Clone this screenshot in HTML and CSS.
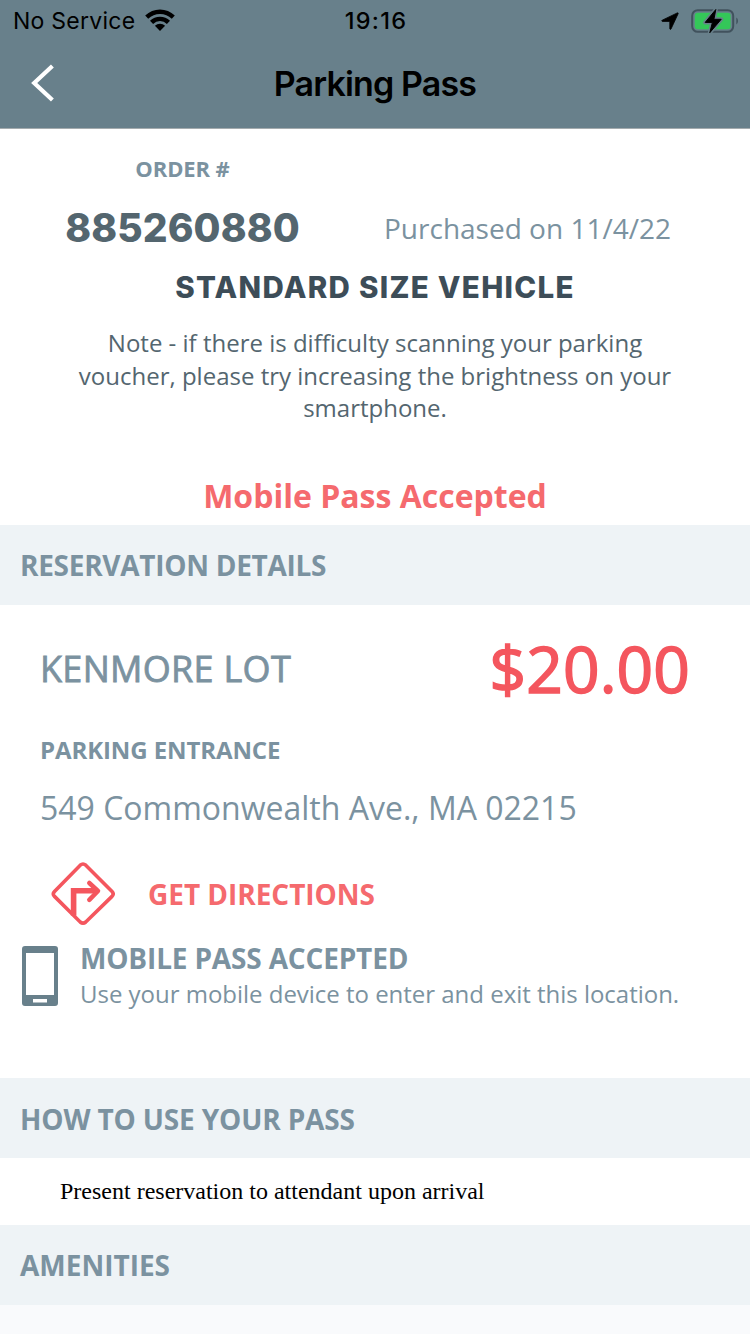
FILE: index.html
```html
<!DOCTYPE html>
<html lang="en">
<head>
<meta charset="utf-8">
<title>Parking Pass</title>
<link rel="stylesheet" href="styles.css">
</head>
<body>
<header class="header">
  <div class="status">
    <div class="status-left">
      <span class="carrier">No Service</span>
      <svg class="wifi" width="30" height="23" viewBox="0 0 30 23">
        <path d="M.2 6.600Q6.500.6 15 .6t14.800 6l-3 3.200Q21.800 5 15 5T3.200 9.800z"/>
        <path d="M5 11.800Q9.200 7.700 15 7.700t10 4.100l-3.100 3.100Q19 12.100 15 12.100t-6.900 2.800z"/>
        <path d="M9.900 16.800Q12 14.800 15 14.800t5.100 2L15 22z"/>
      </svg>
    </div>
    <span class="clock">19:16</span>
    <div class="status-right">
      <svg class="location" width="18" height="18" viewBox="0 0 18 18"><path d="M1.200 8.200 16.300.9q1.200-.3.8.9L10 17q-.8 1-1.200-.2V9.400H1.300q-1.200-.5-.1-1.200z" stroke="#000" stroke-width=".8"/></svg>
      <svg class="battery" width="50" height="26" viewBox="0 0 50 26">
        <rect x="3.200" y="2.200" width="41" height="21.600" rx="5.500" fill="none" stroke="#41525d" stroke-width="2"/>
        <rect x="5.800" y="4.800" width="35.800" height="16.400" rx="3" fill="#34c759"/>
        <path d="M47.300 9.600q1.700.8 1.700 3.400t-1.700 3.400z" fill="#41525d"/>
        <path d="M26.800 1.500 16.200 14.400h7.200l-2.600 10.300L32.200 11.300h-7.300z" stroke="#68808b" stroke-width="4" stroke-linejoin="round"/>
        <path d="M26.800 1.500 16.200 14.400h7.200l-2.600 10.300L32.200 11.300h-7.300z" stroke="#000" stroke-linejoin="round"/>
      </svg>
    </div>
  </div>
  <div class="navbar">
    <svg class="back" width="24" height="38" viewBox="0 0 24 38"><path d="M21.400 2 3.200 19l18.200 17" fill="none" stroke="#fff" stroke-width="4.200"/></svg>
    <h1 class="title">Parking Pass</h1>
  </div>
</header>
<main>
  <section class="order">
    <div class="order-grid">
      <div class="order-label">ORDER #</div>
      <div></div>
      <div class="order-number">885260880</div>
      <div class="purchased">Purchased on 11/4/22</div>
    </div>
    <div class="vehicle">STANDARD SIZE VEHICLE</div>
    <p class="note">Note - if there is difficulty scanning your parking<br>voucher, please try increasing the brightness on your<br>smartphone.</p>
    <div class="accepted">Mobile Pass Accepted</div>
  </section>
  <h2 class="section">RESERVATION DETAILS</h2>
  <section class="details">
    <div class="lot-row">
      <span class="lot">KENMORE LOT</span>
      <span class="price">$20.00</span>
    </div>
    <div class="entrance">PARKING ENTRANCE</div>
    <div class="address">549 Commonwealth Ave., MA 02215</div>
    <div class="directions">
      <svg width="64" height="64" viewBox="0 0 64 64" fill="none" stroke="#f4565e">
        <path d="M29.200 3.200q2.800-2.400 5.600 0L61 29.400q2.300 2.500 0 5L34.800 60q-2.800 2.300-5.600 0L3.500 34.400q-2.400-2.500 0-5z" stroke-width="3.600"/>
        <path d="M22.600 53.500V28.800h24" stroke-width="5.600"/>
        <path d="M38.300 21 47 29 38.300 37.800" stroke-width="4.500" stroke-linecap="round" stroke-linejoin="round"/>
      </svg>
      <span class="get">GET DIRECTIONS</span>
    </div>
    <div class="mobile">
      <svg width="36" height="60" viewBox="0 0 36 60">
        <path fill="#68808b" fill-rule="evenodd" d="M3 0h30q3 0 3 3v54q0 3-3 3H3q-3 0-3-3V3q0-3 3-3zM4 7v42h28V7zM11 53v3.600h14V53z"/>
      </svg>
      <div class="mobile-text">
        <div class="mobile-title">MOBILE PASS ACCEPTED</div>
        <div class="mobile-sub">Use your mobile device to enter and exit this location.</div>
      </div>
    </div>
  </section>
  <h2 class="section how">HOW TO USE YOUR PASS</h2>
  <div class="usage">Present reservation to attendant upon arrival</div>
  <h2 class="section amenities">AMENITIES</h2>
</main>
</body>
</html>
```
FILE: styles.css
```css
* { box-sizing: border-box; }
body {
  margin: 0;
  width: 750px;
  height: 1334px;
  overflow: hidden;
  background: #f9fafc;
  color: #7b92a0;
  font-family: "Open Sans", sans-serif;
  white-space: nowrap;
}
svg { display: block; flex: none; }
h1, h2, p { margin: 0; }
.header {
  height: 129px;
  background: #68808b;
  border-bottom: 1px solid #a4abae;
  color: #000;
  font-family: Inter, sans-serif;
}
.status {
  display: grid;
  grid-template-columns: 1fr auto 1fr;
  align-items: center;
  height: 40px;
  padding: 0 11px 0 13px;
}
.status-left { display: flex; align-items: center; gap: 10px; }
.wifi { margin-top: -1px; }
.carrier { font-size: 23px; line-height: 42px; letter-spacing: 0.25px; }
.clock { font-size: 23.5px; font-weight: 500; line-height: 42px; letter-spacing: 1.3px; }
.status-right { display: flex; align-items: center; justify-content: flex-end; gap: 9px; }
.location { margin-right: 1px; }
.navbar {
  display: grid;
  grid-template-columns: 60px 1fr 60px;
  align-items: center;
  height: 88px;
  padding: 0 30px;
}
.back { margin: -2px 0 0 1px; }
.title { font-size: 34px; font-weight: 600; line-height: 88px; text-align: center; letter-spacing: -0.85px; }
main { background: #fff; }
.order { height: 396px; padding-top: 19px; text-align: center; }
.order-grid {
  display: grid;
  grid-template-columns: 345px 345px;
  grid-template-rows: 40px 80px;
  padding-left: 10px;
}
.order-label { font-size: 22px; font-weight: 700; line-height: 40px; letter-spacing: -0.1px; }
.order-number { color: #54666f; font: 800 39px/80px Inter, sans-serif; letter-spacing: 0.1px; }
.purchased { font-size: 28px; line-height: 80px; }
.vehicle { margin-top: -1px; color: #3d4d58; font: 800 29.5px/40px Inter, sans-serif; letter-spacing: 1.3px; }
.note { margin-top: 20px; color: #54666f; font-size: 24px; line-height: 32.5px; }
.accepted { margin-top: 49px; color: #f56a6e; font-size: 32px; font-weight: 700; line-height: 44px; }
.section {
  height: 80px;
  padding: 0 20px;
  background: #eef3f6;
  font-size: 28px;
  font-weight: 700;
  line-height: 81px;
  letter-spacing: -0.28px;
}
.how { line-height: 82px; letter-spacing: -0.15px; }
.amenities { letter-spacing: 0; }
.details { height: 473px; padding-top: 24px; }
.lot-row { display: flex; justify-content: space-between; height: 80px; padding: 0 60px 0 40px; line-height: 80px; }
.lot { font-size: 36px; letter-spacing: 0.3px; -webkit-text-stroke: 0.8px; }
.price { color: #f4565e; font-size: 64px; letter-spacing: 0.1px; -webkit-text-stroke: 1.6px; }
.entrance { height: 60px; margin-top: 1px; padding-left: 40px; font-size: 24px; font-weight: 700; line-height: 80px; letter-spacing: -0.1px; }
.address { height: 60px; padding-left: 40px; font-size: 32px; line-height: 76px; }
.directions { display: flex; align-items: center; gap: 33px; height: 64px; margin-top: 32px; padding-left: 51px; }
.get { color: #f56a6e; font-size: 28px; font-weight: 700; letter-spacing: -0.03px; }
.mobile { display: flex; gap: 22px; margin-top: 16px; padding-left: 22px; }
.mobile svg { margin-top: 4px; }
.mobile-text { margin-top: -2px; }
.mobile-title { font-size: 28px; font-weight: 700; line-height: 36px; letter-spacing: -0.16px; }
.mobile-sub { font-size: 24px; line-height: 36px; letter-spacing: -0.02px; }
.usage { height: 67px; padding-left: 60px; color: #000; font: 24px/67px "Liberation Serif", serif; }
```
